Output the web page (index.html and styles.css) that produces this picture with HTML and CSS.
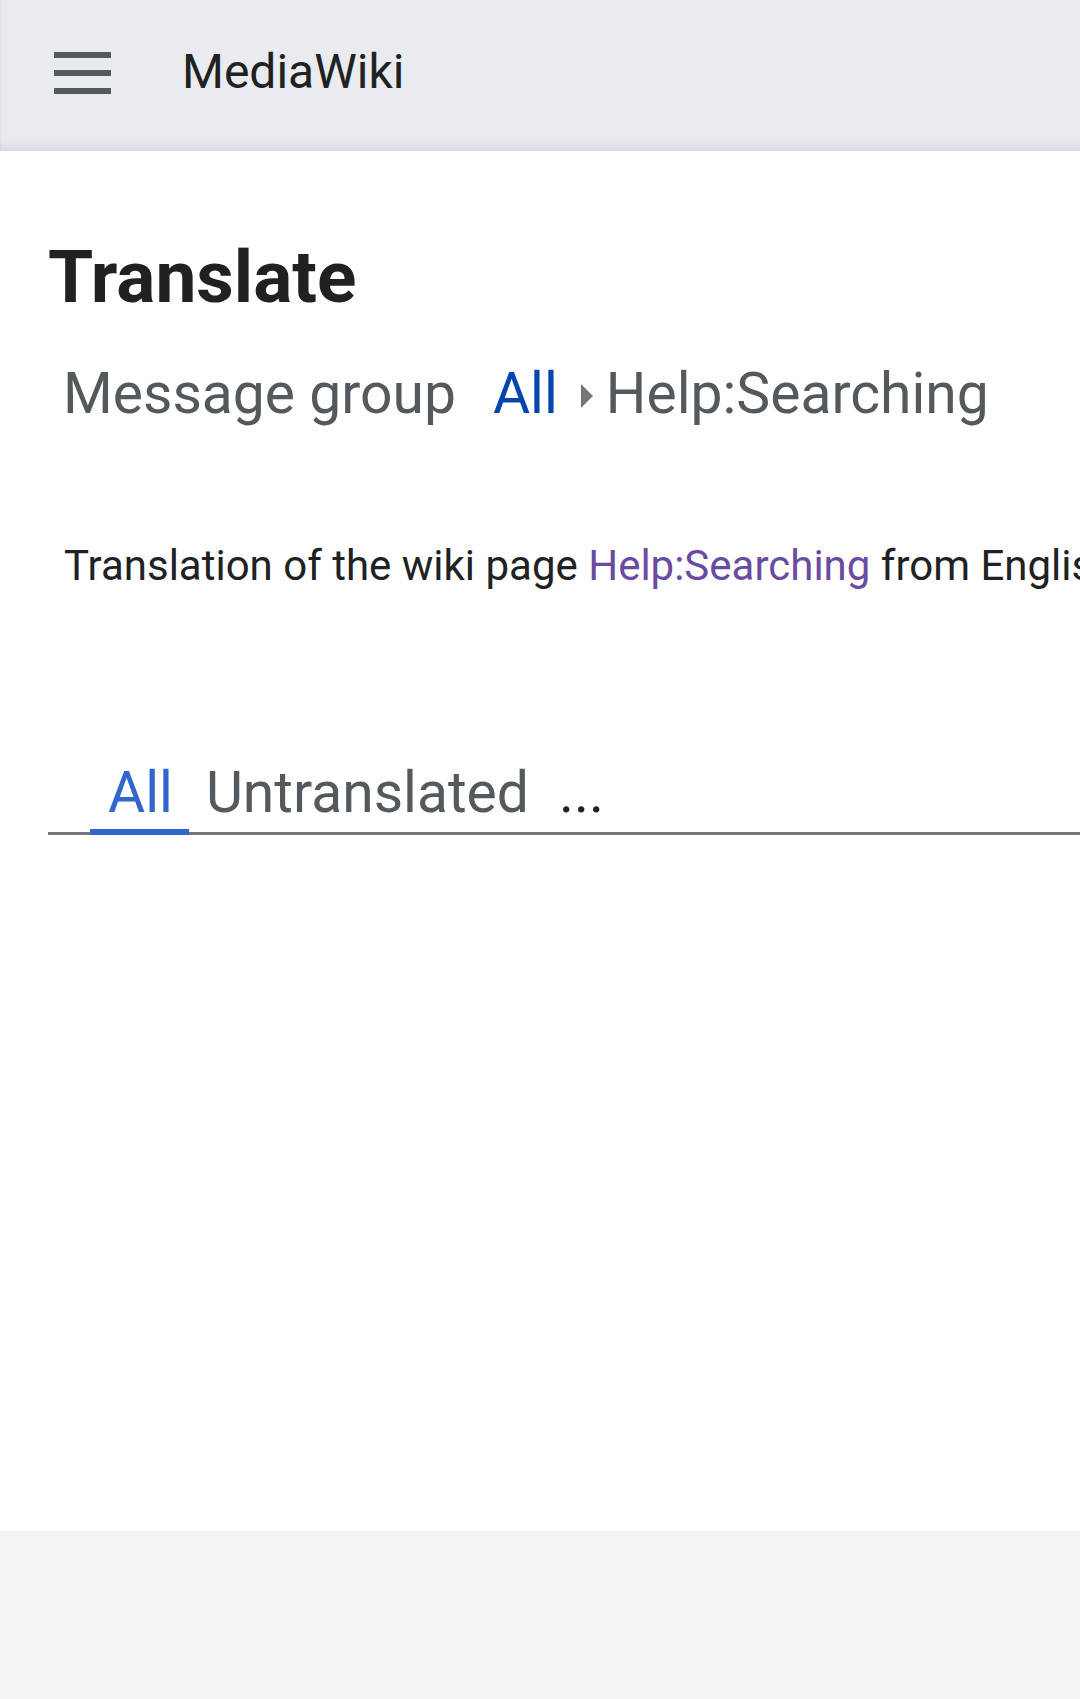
FILE: index.html
```html
<!DOCTYPE html>
<html lang="en">
<head>
<meta charset="utf-8">
<title>Translate - MediaWiki</title>
<link rel="stylesheet" href="styles.css">
</head>
<body>
<header class="header">
  <button class="menu-btn" aria-label="Open main menu">
    <svg width="57" height="42" viewBox="0 0 57 42" aria-hidden="true">
      <rect x="0" y="0" width="57" height="6" fill="#54595d"/>
      <rect x="0" y="18" width="57" height="6" fill="#54595d"/>
      <rect x="0" y="36" width="57" height="6" fill="#54595d"/>
    </svg>
  </button>
  <span class="site-name">MediaWiki</span>
</header>
<main class="main">
  <h1 class="page-title">Translate</h1>
  <div class="group-selector">
    <span class="group-label">Message group</span>
    <a class="group-all" href="#">All</a>
    <span class="crumb-arrow"></span>
    <span class="group-current">Help:Searching</span>
  </div>
  <p class="description">Translation of the wiki page <a class="visited" href="#">Help:Searching</a> from English.</p>
  <nav class="tabs">
    <span class="tab tab-active">All</span>
    <span class="tab">Untranslated</span>
    <span class="tab tab-more">...</span>
  </nav>
</main>
<footer class="footer"></footer>
</body>
</html>
```
FILE: styles.css
```css
html, body {
  margin: 0;
  padding: 0;
}
body {
  width: 1080px;
  height: 1699px;
  overflow: hidden;
  font-family: Roboto, "Liberation Sans", sans-serif;
  color: #202122;
  background: #fff;
  white-space: nowrap;
}
.header {
  height: 151px;
  display: flex;
  align-items: flex-start;
  background: linear-gradient(to bottom, #eaebef 0, #eaebef 138px, #dcdde1 151px);
  box-shadow: inset 3px 0 3px -2px rgba(0, 0, 0, 0.05);
}
.menu-btn {
  margin: 52px 0 0 54px;
  padding: 0;
  border: 0;
  background: none;
  width: 57px;
  height: 42px;
  display: block;
}
.menu-btn svg {
  display: block;
}
.site-name {
  margin: 48px 0 0 71px;
  font-size: 48px;
  line-height: 1;
  color: #202122;
}
.main {
  height: 1380px;
  padding-left: 48px;
  box-sizing: border-box;
  padding-top: 90px;
}
.page-title {
  margin: 0;
  font-size: 73px;
  font-weight: 700;
  line-height: 1;
  color: #202122;
}
.group-selector {
  margin: 51px 0 0 15px;
  display: flex;
  align-items: center;
  font-size: 57px;
  line-height: 1;
  color: #54595d;
}
.group-all {
  margin-left: 37px;
  color: #0645ad;
  text-decoration: none;
}
.crumb-arrow {
  width: 0;
  height: 0;
  margin: 4px 13px 0 23px;
  border-top: 12px solid transparent;
  border-bottom: 12px solid transparent;
  border-left: 12px solid #777;
}
.description {
  margin: 123px 0 0 16px;
  font-size: 42px;
  line-height: 1;
}
.description a.visited {
  color: #6b4ba1;
  text-decoration: none;
}
.tabs {
  margin-top: 177px;
  display: flex;
  align-items: flex-end;
  padding-left: 42px;
  box-shadow: inset 0 -3px 0 #777;
  font-size: 57px;
  line-height: 1;
}
.tab {
  padding: 0 17px 8px 17px;
  border-bottom: 6px solid transparent;
  color: #54595d;
}
.tab-active {
  color: #36c;
  border-bottom-color: #36c;
  padding-left: 18px;
  padding-right: 16px;
}
.tab-more {
  color: #202122;
  padding-left: 13px;
}
.footer {
  height: 168px;
  background: #f4f4f4;
}
```
